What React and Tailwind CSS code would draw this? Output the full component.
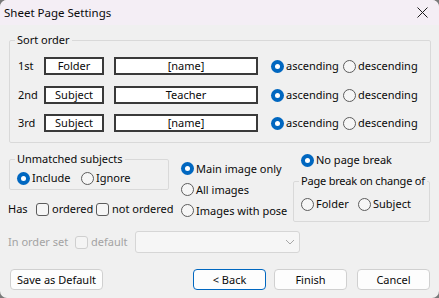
import React from 'react';

const Radio = ({ checked, label, className = '' }) => (
  <div className={`flex items-center h-[16px] shrink-0 ${className}`}>
    {checked ? (
      <span className="w-[13px] h-[13px] rounded-full bg-[#0067c0] flex items-center justify-center shrink-0">
        <span className="w-[5px] h-[5px] rounded-full bg-white" />
      </span>
    ) : (
      <span className="w-[13px] h-[13px] rounded-full border border-[#5c5c5c] bg-[#f6f6f6] shrink-0" />
    )}
    <span className="ml-[2px] whitespace-nowrap">{label}</span>
  </div>
);

const Check = ({ label, disabled, className = '' }) => (
  <div className={`flex items-center h-[16px] shrink-0 ${className}`}>
    <span className={`w-[13px] h-[13px] rounded-[3px] border shrink-0 ${disabled ? 'border-[#cfcfcf] bg-[#f4f4f4]' : 'border-[#5c5c5c] bg-[#f6f6f6]'}`} />
    <span className={`ml-[3px] whitespace-nowrap ${disabled ? 'text-[#a3a3a3]' : ''}`}>{label}</span>
  </div>
);

const Box = ({ children, className = '' }) => (
  <div className={`h-[18px] shrink-0 border-2 border-[#3a3a3a] bg-white flex items-center justify-center ${className}`}>
    {children}
  </div>
);

const Btn = ({ children, primary, className = '' }) => (
  <button className={`h-[21px] w-[73px] shrink-0 rounded-[4px] bg-[#fdfdfd] flex items-center justify-center ${primary ? 'border border-[#0067c0]' : 'border border-[#d0d0d0]'} ${className}`}>
    {children}
  </button>
);

const sortRows = [
  { n: '1st', field: 'Folder', value: '[name]', mt: '' },
  { n: '2nd', field: 'Subject', value: 'Teacher', mt: 'mt-[11px]' },
  { n: '3rd', field: 'Subject', value: '[name]', mt: 'mt-[10px]' },
];

export default function App() {
  return (
    <div className="w-[439px] h-[298px] bg-[#7a7a7a] overflow-hidden">
      <div className="w-full h-full rounded-[7px] overflow-hidden bg-[#f0f0f0] flex flex-col text-[11px] leading-[16px] text-[#0a0a0a] font-['Noto_Sans',sans-serif]">
        <div className="h-[25px] shrink-0 bg-[#f4eef5] flex items-center justify-between pl-[4px] pr-[11px]">
          <span className="text-[11.5px]">Sheet Page Settings</span>
          <svg width="11" height="11" viewBox="0 0 11 11">
            <path d="M0.5 0.5 L10.5 10.5 M10.5 0.5 L0.5 10.5" stroke="#1b1b1b" strokeWidth="1" />
          </svg>
        </div>

        <div className="flex flex-col pl-[8px] pt-[7px]">
          <fieldset className="ml-[1px] w-[422px] border border-[#d9d9d9] rounded-[2px] pl-[8px] pt-[9px] pb-[10px]">
            <legend className="-ml-[3px] px-[2px]">Sort order</legend>
            {sortRows.map((r) => (
              <div key={r.n} className={`flex items-center ${r.mt}`}>
                <span className="w-[26px] shrink-0">{r.n}</span>
                <Box className="w-[60px]">{r.field}</Box>
                <Box className="w-[144px] ml-[10px]">{r.value}</Box>
                <Radio checked label="ascending" className="w-[72px] ml-[13px]" />
                <Radio label="descending" />
              </div>
            ))}
          </fieldset>

          <div className="flex items-start mt-[8px]">
            <div className="w-[161px] shrink-0 flex flex-col">
              <fieldset className="ml-[1px] border border-[#d9d9d9] rounded-[2px] pl-[7px] pt-[3px] pb-[3px]">
                <legend className="-ml-[2px] px-[2px] whitespace-nowrap">Unmatched subjects</legend>
                <div className="flex">
                  <Radio checked label="Include" className="w-[64px]" />
                  <Radio label="Ignore" />
                </div>
              </fieldset>
              <div className="flex items-center mt-[11px]">
                <span className="w-[28px] shrink-0">Has</span>
                <Check label="ordered" className="w-[60px]" />
                <Check label="not ordered" />
              </div>
            </div>

            <div className="ml-[12px] w-[112px] shrink-0 flex flex-col pt-[7px]">
              <div className="h-[21px] flex items-center"><Radio checked label="Main image only" /></div>
              <div className="h-[21px] flex items-center"><Radio label="All images" /></div>
              <div className="h-[21px] flex items-center"><Radio label="Images with pose" /></div>
            </div>

            <div className="w-[137px] shrink-0 flex flex-col pt-[1px]">
              <Radio checked label="No page break" className="ml-[8px]" />
              <fieldset className="mt-[5px] border border-[#d9d9d9] rounded-[2px] pl-[7px] pt-[7px] pb-[9px]">
                <legend className="-ml-[2px] px-[2px] whitespace-nowrap tracking-[-0.2px]">Page break on change of</legend>
                <div className="flex">
                  <Radio label="Folder" className="w-[57px]" />
                  <Radio label="Subject" />
                </div>
              </fieldset>
            </div>
          </div>

          <div className="flex items-center mt-[9px] h-[22px]">
            <span className="w-[67px] shrink-0 text-[#a3a3a3]">In order set</span>
            <Check disabled label="default" className="w-[60px]" />
            <div className="w-[165px] h-[22px] rounded-[3px] border border-[#d6d6d6] bg-[#f6f6f6] flex items-center justify-end pr-[4px]">
              <svg width="10" height="6" viewBox="0 0 10 6">
                <path d="M1 1 L5 5 L9 1" fill="none" stroke="#a8a8a8" strokeWidth="1" />
              </svg>
            </div>
          </div>

          <div className="flex items-center mt-[16px]">
            <Btn className="ml-[2px] w-[93px]">Save as Default</Btn>
            <Btn primary className="ml-[90px]">&lt; Back</Btn>
            <Btn className="ml-[8px]">Finish</Btn>
            <Btn className="ml-[10px]">Cancel</Btn>
          </div>
        </div>
      </div>
    </div>
  );
}
